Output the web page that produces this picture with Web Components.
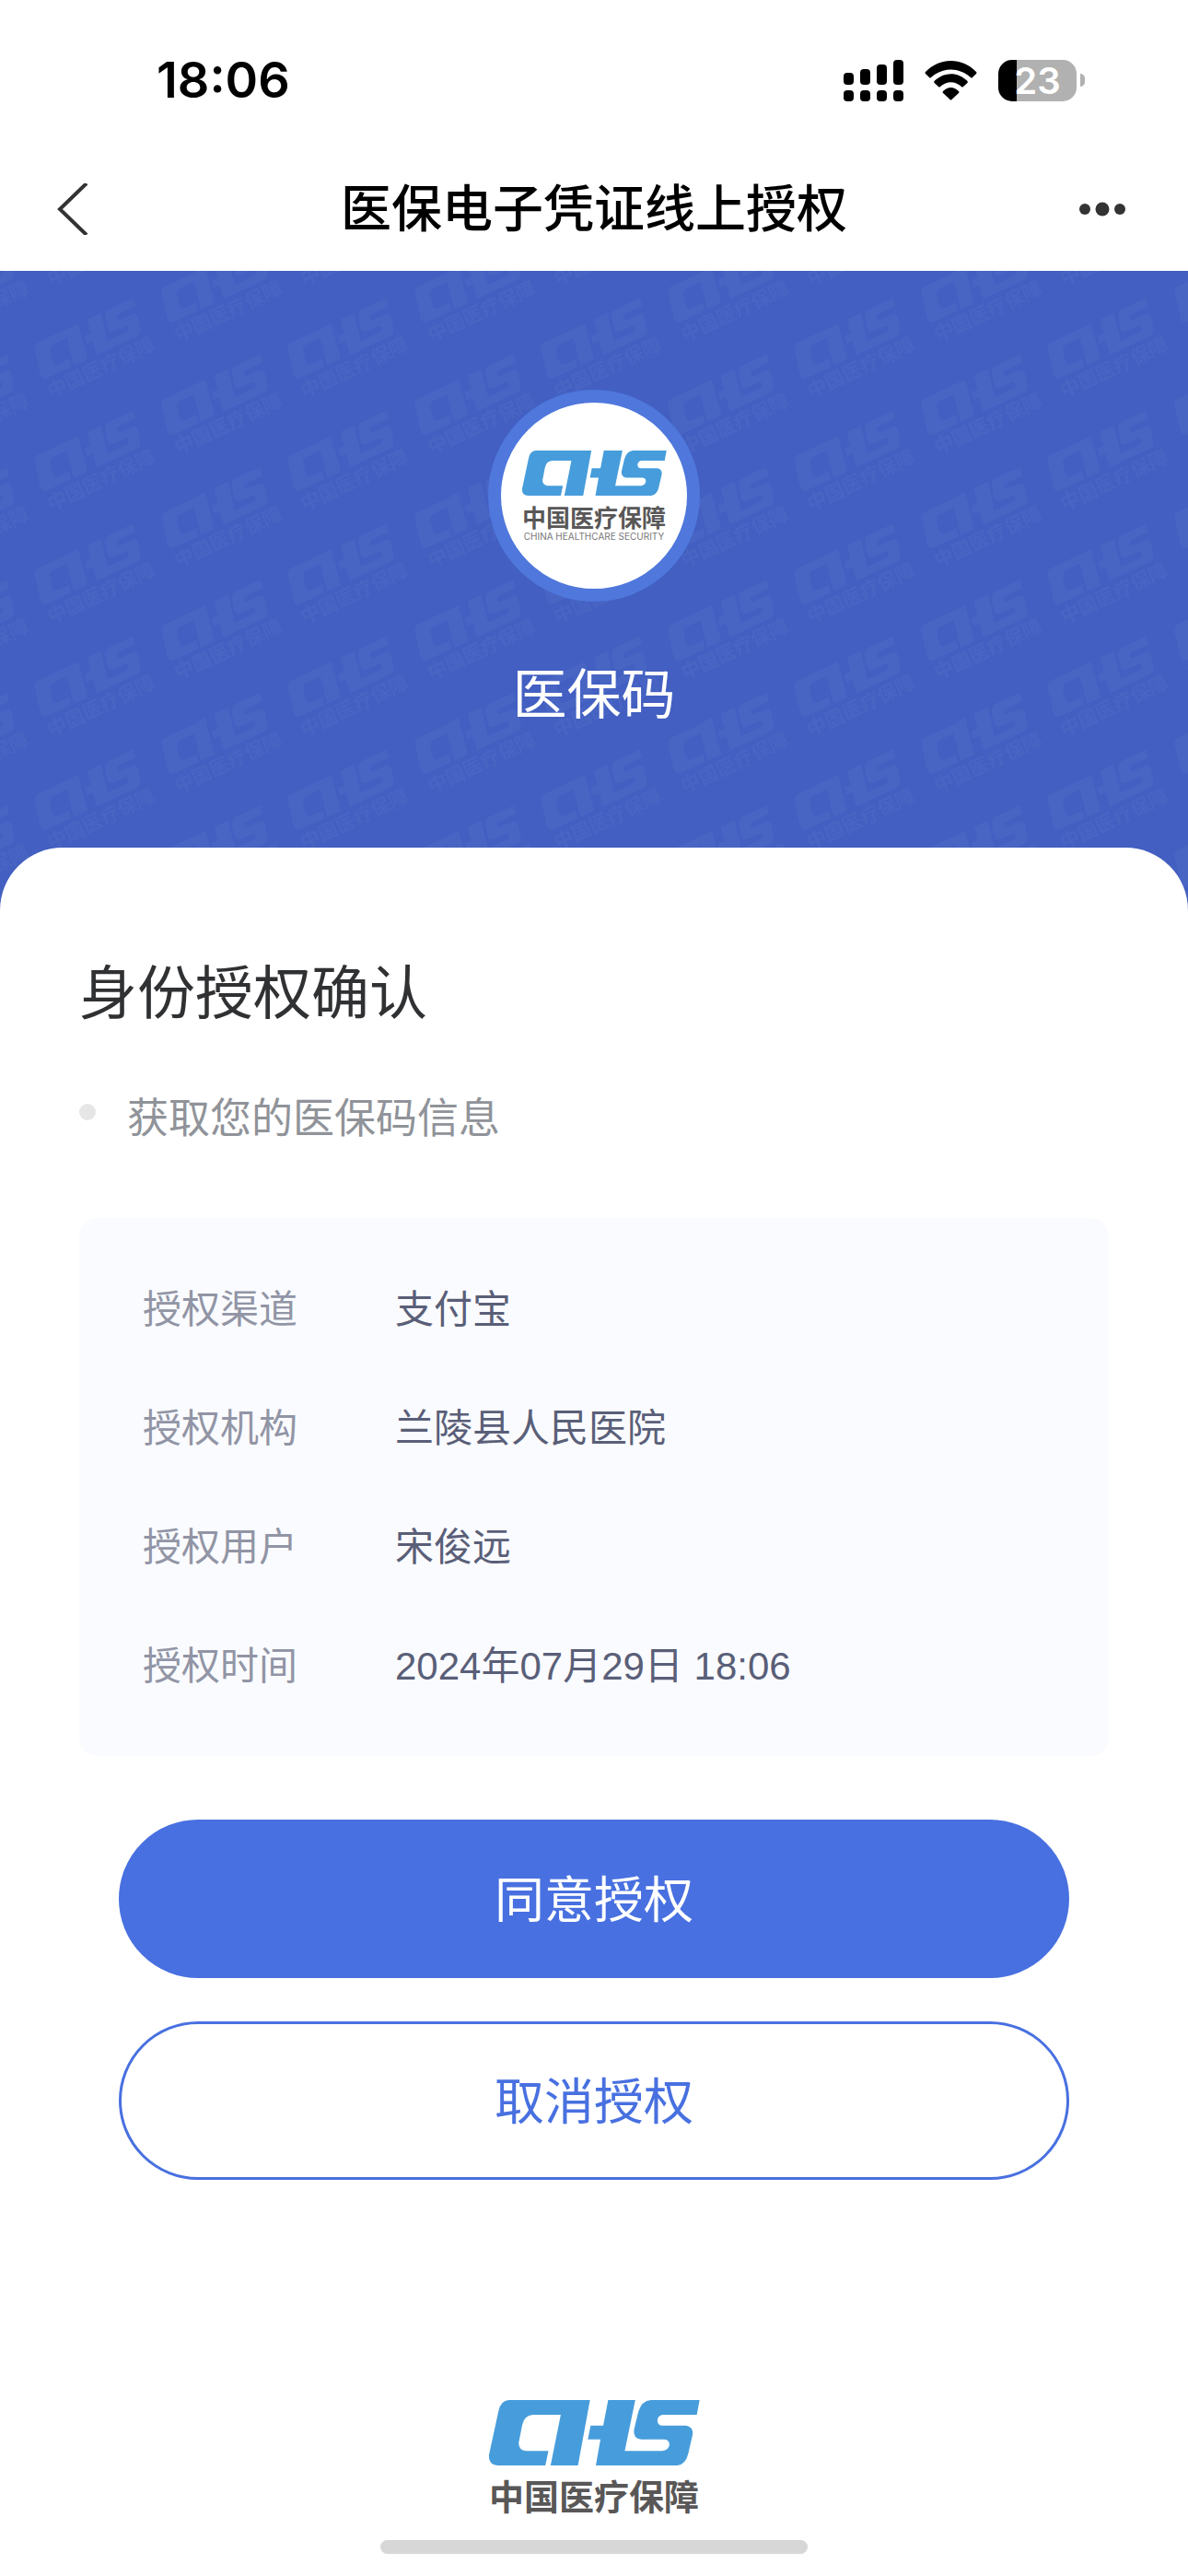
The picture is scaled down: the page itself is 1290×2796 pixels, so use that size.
<!DOCTYPE html>
<html lang="zh-CN">
<head>
<meta charset="utf-8">
<meta name="viewport" content="width=device-width, initial-scale=1">
<title>医保电子凭证线上授权</title>
<style>
  body {
    margin: 0;
    background: #fff;
    font-family: "Liberation Sans", "Noto Sans CJK SC", sans-serif;
  }
</style>
</head>
<body>
<auth-page>
  <status-bar slot="top" time="18:06" battery="23"></status-bar>
  <nav-bar slot="top">医保电子凭证线上授权</nav-bar>
  <hero-banner slot="top">医保码</hero-banner>
  <auth-sheet>
    <span slot="title">身份授权确认</span>
    <span slot="scope">获取您的医保码信息</span>
    <info-card slot="details">
      <info-row label="授权渠道">支付宝</info-row>
      <info-row label="授权机构">兰陵县人民医院</info-row>
      <info-row label="授权用户">宋俊远</info-row>
      <info-row label="授权时间">2024年07月29日 18:06</info-row>
    </info-card>
    <pill-button slot="actions" primary>同意授权</pill-button>
    <pill-button slot="actions">取消授权</pill-button>
  </auth-sheet>
  <page-footer slot="bottom"></page-footer>
</auth-page>

<script>
  const define = (name, markup, setup) => {
    const template = document.createElement('template');
    template.innerHTML = markup;
    customElements.define(name, class extends HTMLElement {
      constructor() {
        super();
        this.attachShadow({ mode: 'open' }).append(template.content.cloneNode(true));
      }
      connectedCallback() {
        if (setup) setup(this, this.shadowRoot);
      }
    });
  };

  // Emblem outline on a 685 x 212 canvas
  const EMBLEM = `
    <path d="M64 0H328L289 212H200L233 48H142Q115 50 108 80L97 136Q94 162 120 165H193L183 212H28Q-3 210 0 178L31 35Q38 2 64 0Z"/>
    <path d="M387 0H475L441 165H562Q584 163 586 145Q586 128 567 128H495Q467 124 471 96L485 38Q496 2 526 0H684L675 48H563Q546 53 547 69Q549 83 563 83H640Q662 86 662 109L648 170Q640 208 612 212H347L362 128H321L330 83H371Z"/>`;

  define('auth-page', `
    <style>
      :host { display: flex; flex-direction: column; min-height: 100vh; }
      header, main, footer { display: block; }
    </style>
    <header><slot name="top"></slot></header>
    <main><slot></slot></main>
    <footer><slot name="bottom"></slot></footer>
  `);

  define('status-bar', `
    <style>
      :host {
        display: flex; align-items: center; justify-content: space-between;
        box-sizing: border-box; height: 160px; padding: 14px 112px 0 170px;
        font-family: Inter, sans-serif; font-weight: 600; color: #000;
      }
      .time { font-size: 54px; line-height: 64px; }
      .icons { display: flex; align-items: center; gap: 23px; }
      svg { display: block; }
      .battery { display: flex; align-items: center; gap: 4px; }
      .cell {
        width: 85px; height: 45px; border-radius: 15px; color: #fff;
        background: linear-gradient(90deg, #000 20px, #b1b1b1 20px);
        font-size: 40px; line-height: 45px; text-align: center;
      }
      .nub { width: 5px; height: 14px; border-radius: 0 7px 7px 0; background: #b1b1b1; }
    </style>
    <span class="time"></span>
    <div class="icons">
      <svg width="65" height="45" viewBox="0 0 65 45" aria-hidden="true">
        <rect x="0" y="14" width="11" height="13" rx="4"/><rect x="18" y="10" width="11" height="17" rx="4"/>
        <rect x="36" y="5" width="11" height="22" rx="4"/><rect x="54" y="0" width="11" height="27" rx="4"/>
        <rect x="0" y="33" width="11" height="12" rx="4"/><rect x="18" y="33" width="11" height="12" rx="4"/>
        <rect x="36" y="33" width="11" height="12" rx="4"/><rect x="54" y="33" width="11" height="12" rx="4"/>
      </svg>
      <svg width="57" height="43" viewBox="0 0 57 43" aria-hidden="true">
        <path d="M1 12C16 -4 41 -4 56 12Q57 13 56 14L52 18Q51 19 50 18C37 6.500 20 6.500 7 18Q6 19 5 18L1 14Q0 13 1 12Z"/>
        <path d="M10.500 22C21 11.500 36 11.500 46.500 22Q47 23 46.500 24L42 28Q41 29 40 28C33 21.500 24 21.500 17 28Q16 29 15 28L10.500 24Q10 23 10.500 22Z"/>
        <path d="M20 33Q28.500 25 37 33Q38 34 37 35L29.500 42Q28.500 43 27.500 42L20 35Q19 34 20 33Z"/>
      </svg>
      <div class="battery"><div class="cell"></div><div class="nub"></div></div>
    </div>
  `, (host, root) => {
    root.querySelector('.time').textContent = host.getAttribute('time');
    root.querySelector('.cell').textContent = host.getAttribute('battery');
  });

  define('nav-bar', `
    <style>
      :host {
        display: grid; grid-template-columns: 160px 1fr 160px; align-items: center;
        height: 134px; color: #333;
      }
      button {
        display: flex; height: 100px; padding: 0; border: 0; background: none;
        align-items: center; color: inherit;
      }
      .back { padding-left: 61px; }
      .more { justify-content: flex-end; padding-right: 68px; }
      h1 { margin: 0; font-size: 55px; line-height: 80px; font-weight: 500; text-align: center; color: #000; }
    </style>
    <button class="back" type="button" aria-label="返回">
      <svg width="35" height="56" viewBox="0 0 35 56" aria-hidden="true">
        <path d="M33 0L4 28L33 56" fill="none" stroke="currentColor" stroke-width="4"/>
      </svg>
    </button>
    <h1><slot></slot></h1>
    <button class="more" type="button" aria-label="更多">
      <svg width="50" height="16" viewBox="0 0 50 16" fill="currentColor" aria-hidden="true">
        <circle cx="6" cy="8" r="6"/><circle cx="25" cy="8" r="7.500"/><circle cx="44" cy="8" r="6"/>
      </svg>
    </button>
  `);

  define('chs-logo', `
    <style>
      :host { display: flex; flex-direction: column; align-items: center; color: #595757; }
      svg { display: block; width: 229px; height: 71px; fill: #479ddb; }
      .cn { margin-top: 12px; font: 700 38px/40px "Noto Sans CJK SC", sans-serif; white-space: nowrap; }
      .en { display: none; font: 400 10px/12px Inter, sans-serif; white-space: nowrap; }
      :host([badge]) svg { width: 157px; height: 49px; }
      :host([badge]) .cn { margin-top: 8px; font-size: 26px; line-height: 30px; }
      :host([badge]) .en { display: block; color: #777; }
    </style>
    <svg viewBox="0 0 685 212" preserveAspectRatio="none" aria-hidden="true">${EMBLEM}</svg>
    <span class="cn">中国医疗保障</span>
    <span class="en"></span>
  `, (host, root) => {
    if (host.hasAttribute('badge')) root.querySelector('.en').textContent = 'CHINA HEALTHCARE SECURITY';
  });

  define('hero-banner', `
    <style>
      :host { display: grid; background: #425fc1; }
      .marks, .content { grid-area: 1 / 1; }
      .marks { width: 100%; height: 100%; min-height: 0; contain: size; }
      .content {
        z-index: 1; display: flex; flex-direction: column; align-items: center;
        gap: 62px; padding: 129px 0 193px;
      }
      .badge {
        box-sizing: border-box; width: 230px; height: 230px; border-radius: 50%;
        border: 14px solid #4f77dc; background: #fff;
        display: flex; align-items: center; justify-content: center;
      }
      .name { font-size: 59px; line-height: 80px; color: #fff; }
    </style>
    <svg class="marks" aria-hidden="true">
      <defs>
        <g id="mark" transform="rotate(-25)" fill="#4865c4">
          <g transform="scale(.185)">${EMBLEM}</g>
          <text x="0" y="61" font-size="21" font-weight="700">中国医疗保障</text>
        </g>
        <g id="column">
          <use href="#mark" y="-122"/><use href="#mark"/><use href="#mark" y="122"/><use href="#mark" y="245"/>
        </g>
        <pattern id="tile" width="275" height="245" patternUnits="userSpaceOnUse">
          <use href="#column" x="30" y="83"/>
          <use href="#column" x="168" y="22"/>
          <use href="#column" x="168" y="266"/>
          <use href="#column" x="-107" y="22"/>
        </pattern>
      </defs>
      <rect width="100%" height="100%" fill="url(#tile)"/>
    </svg>
    <div class="content">
      <div class="badge"><chs-logo badge></chs-logo></div>
      <div class="name"><slot></slot></div>
    </div>
  `);

  define('auth-sheet', `
    <style>
      :host {
        display: block; position: relative; z-index: 2; margin-top: -68px; padding: 114px 86px 0;
        border-radius: 68px 68px 0 0; background: #fff;
      }
      h2 { margin: 0 0 61px; font-size: 63px; line-height: 88px; font-weight: 400; color: #303133; }
      ul { margin: 0 0 75px; padding: 0; list-style: none; }
      li { display: flex; align-items: center; gap: 34px; font-size: 45px; line-height: 64px; color: #909399; }
      li::before { content: ""; width: 18px; height: 18px; margin-bottom: 16px; border-radius: 50%; background: #e6e6e6; }
      .actions { display: flex; flex-direction: column; gap: 47px; margin: 69px 43px 0; }
    </style>
    <h2><slot name="title"></slot></h2>
    <ul><li><slot name="scope"></slot></li></ul>
    <slot name="details"></slot>
    <div class="actions"><slot name="actions"></slot></div>
  `);

  define('info-card', `
    <style>
      :host {
        display: flex; flex-direction: column; gap: 69px; padding: 70px 69px 67px;
        border-radius: 20px; background: #fafbff;
      }
    </style>
    <slot></slot>
  `);

  define('info-row', `
    <style>
      :host { display: block; font-size: 42px; line-height: 60px; }
      dl { display: flex; margin: 0; }
      dt { flex: 0 0 274px; color: #9195a5; }
      dd { flex: 1; margin: 0; color: #5a5f78; }
    </style>
    <dl><dt></dt><dd><slot></slot></dd></dl>
  `, (host, root) => {
    root.querySelector('dt').textContent = host.getAttribute('label');
  });

  define('pill-button', `
    <style>
      :host { display: block; }
      button {
        display: block; box-sizing: border-box; width: 100%; height: 172px; padding: 4px 0 0;
        border: 3px solid #4870e0; border-radius: 86px; background: #fff;
        font: inherit; font-size: 54px; line-height: 80px; color: #4870e0;
      }
      :host([primary]) button { background: #4870e0; color: #fff; }
    </style>
    <button type="button"><slot></slot></button>
  `);

  define('page-footer', `
    <style>
      :host { display: flex; flex-direction: column; align-items: center; padding: 239px 0 24px; }
      .home { width: 36%; height: 15px; margin-top: 29px; border-radius: 8px; background: #d7d7d7; }
    </style>
    <chs-logo></chs-logo>
    <div class="home"></div>
  `);
</script>
</body>
</html>
